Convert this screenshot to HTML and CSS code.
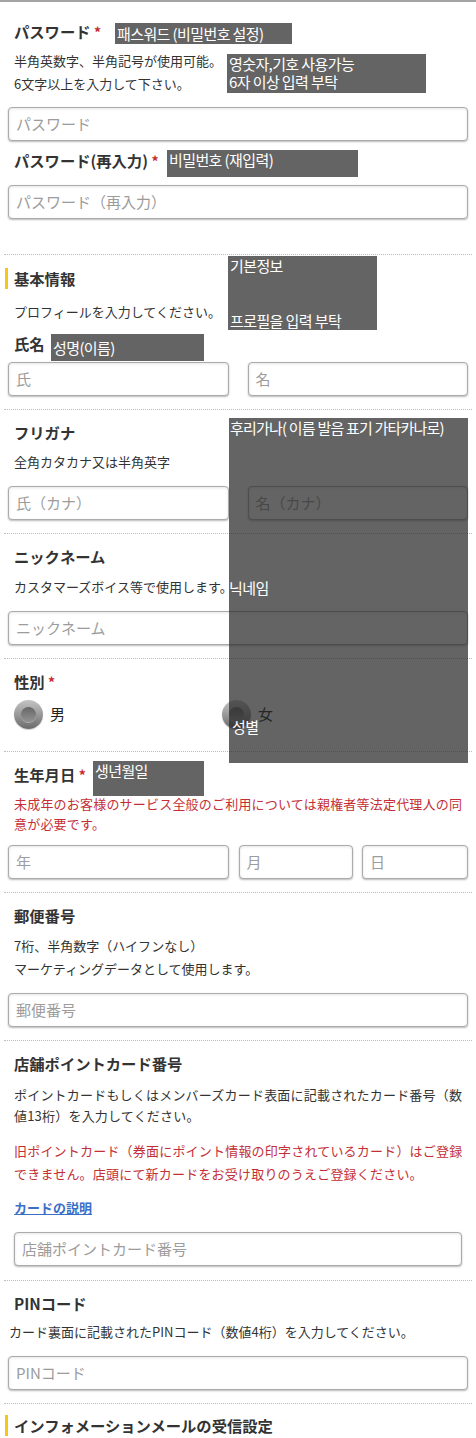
FILE: index.html
```html
<!DOCTYPE html>
<html lang="ja">
<head>
<meta charset="utf-8">
<title>会員登録</title>
<link rel="stylesheet" href="styles.css">
</head>
<body>
<div class="topline"></div>
<div class="page">
  <section class="section section--first">
    <div class="label">パスワード <span class="req">*</span></div>
    <p class="help help--pw">半角英数字、半角記号が使用可能。<br>6文字以上を入力して下さい。</p>
    <div class="field field--pw"><span class="ph">パスワード</span></div>
    <div class="label label--after-field">パスワード(再入力) <span class="req">*</span></div>
    <div class="field field--pw2"><span class="ph">パスワード（再入力）</span></div>
  </section>

  <section class="section section--head">
    <h2 class="heading">基本情報</h2>
    <p class="help help--profile">プロフィールを入力してください。</p>
    <div class="label label--name">氏名</div>
    <div class="pair">
      <div class="field field--tight"><span class="ph">氏</span></div>
      <div class="field field--tight"><span class="ph">名</span></div>
    </div>
  </section>

  <section class="section">
    <div class="label">フリガナ</div>
    <p class="help">全角カタカナ又は半角英字</p>
    <div class="pair pair--spaced">
      <div class="field field--tight"><span class="ph">氏（カナ）</span></div>
      <div class="field field--tight"><span class="ph">名（カナ）</span></div>
    </div>
  </section>

  <section class="section">
    <div class="label">ニックネーム</div>
    <p class="help help--nick">カスタマーズボイス等で使用します。</p>
    <div class="field"><span class="ph">ニックネーム</span></div>
  </section>

  <section class="section section--gender">
    <div class="label">性別 <span class="req">*</span></div>
    <div class="radios">
      <label class="radio-item"><span class="radio"></span><span class="radio-text">男</span></label>
      <label class="radio-item"><span class="radio"></span><span class="radio-text">女</span></label>
    </div>
  </section>

  <section class="section">
    <div class="label">生年月日 <span class="req">*</span></div>
    <p class="note note--birth">未成年のお客様のサービス全般のご利用については親権者等法定代理人の同意が必要です。</p>
    <div class="birth">
      <div class="field field--tight"><span class="ph">年</span></div>
      <div class="field field--tight"><span class="ph">月</span></div>
      <div class="field field--tight"><span class="ph">日</span></div>
    </div>
  </section>

  <section class="section">
    <div class="label label--postal">郵便番号</div>
    <p class="help help--postal">7桁、半角数字（ハイフンなし）<br>マーケティングデータとして使用します。</p>
    <div class="field"><span class="ph">郵便番号</span></div>
  </section>

  <section class="section section--card">
    <div class="label label--postal">店舗ポイントカード番号</div>
    <p class="help help--card">ポイントカードもしくはメンバーズカード表面に記載されたカード番号（数値13桁）を入力してください。</p>
    <p class="note note--card">旧ポイントカード（券面にポイント情報の印字されているカード）はご登録できません。店頭にて新カードをお受け取りのうえご登録ください。</p>
    <a class="link" href="#">カードの説明</a>
    <div class="field field--card"><span class="ph">店舗ポイントカード番号</span></div>
  </section>

  <section class="section">
    <div class="label label--postal">PINコード</div>
    <p class="help help--pin">カード裏面に記載されたPINコード（数値4桁）を入力してください。</p>
    <div class="field"><span class="ph">PINコード</span></div>
  </section>

  <section class="section section--last">
    <h2 class="heading">インフォメーションメールの受信設定</h2>
  </section>

  <div class="ov ov-1">패스워드 (비밀번호 설정)</div>
  <div class="ov ov-2">영숫자,기호 사용가능<br>6자 이상 입력 부탁</div>
  <div class="ov ov-3">비밀번호 (재입력)</div>
  <div class="ov ov-4"><span>기본정보</span><span>프로필을 입력 부탁</span></div>
  <div class="ov ov-5">성명(이름)</div>
  <div class="ov ov-6">
    <span class="ov6-a">후리가나( 이름 발음 표기 가타카나로)</span>
    <span class="ov6-b">닉네임</span>
    <span class="ov6-c">성별</span>
  </div>
  <div class="ov ov-7">생년월일</div>
</div>
</body>
</html>
```

FILE: styles.css
```css
* { box-sizing: border-box; }

html, body {
  margin: 0;
  padding: 0;
  background: #ffffff;
}

body {
  font-family: "Noto Sans CJK JP", "Noto Sans", sans-serif;
  color: #333333;
  width: 476px;
  overflow: hidden;
}

.topline {
  height: 2px;
  background: #a4a4a4;
}

.page {
  position: relative;
}

.section {
  margin: 0 4px;
  padding: 11px 4px 13px;
  border-bottom: 1px dotted #bcbcbc;
}

.section--first {
  padding-top: 18px;
  padding-bottom: 35px;
}

.section--head {
  padding-top: 13px;
}

.section--gender {
  padding-bottom: 22px;
}

.section--card {
  padding-bottom: 14px;
}

.section--last {
  border-bottom: none;
  padding-top: 11px;
}

.label {
  height: 22px;
  overflow: visible;
  font-size: 15.3px;
  font-weight: 700;
  line-height: 22px;
  padding-left: 6px;
  color: #333333;
  white-space: nowrap;
}

.label--postal {
  margin-top: 0;
}

.label--after-field {
  margin-top: 8px;
}

.label--name {
  margin-top: 9px;
}

.req {
  color: #c8282f;
  font-size: 14px;
  line-height: 1;
}

.heading {
  height: 21px;
  margin: 0 0 0 -3px;
  border-left: 3px solid #f3c816;
  padding-left: 6px;
  font-size: 15.3px;
  font-weight: 700;
  line-height: 21px;
  color: #333333;
  white-space: nowrap;
}

.help,
.note {
  margin: 8px 0 0;
  padding-left: 6px;
  font-size: 13px;
  line-height: 22px;
  color: #333333;
}

.help--pw {
  margin-top: 7px;
  height: 46px;
  line-height: 23px;
}

.help--profile {
  margin-top: 12px;
  height: 22px;
}

.help--nick {
  margin-top: 9px;
}

.help--postal {
  height: 46px;
  line-height: 23px;
}

.help--card {
  margin-top: 10px;
  height: 42px;
  line-height: 21px;
  letter-spacing: 0.2px;
}

.help--pin {
  margin-top: 7px;
  padding-left: 1px;
}

.note {
  color: #c42f36;
  letter-spacing: 0.2px;
}

.note--birth {
  margin-top: 9px;
  height: 40px;
  line-height: 20px;
}

.note--card {
  margin-top: 13px;
  height: 46px;
  line-height: 23px;
}

.link {
  display: block;
  height: 22px;
  margin-top: 12px;
  padding-left: 6px;
  font-size: 13px;
  line-height: 22px;
  font-weight: 700;
  color: #3b6fc6;
  text-decoration: underline;
  width: max-content;
}

.field {
  margin-top: 13px;
  height: 34px;
  border: 1px solid #ababab;
  border-radius: 4px;
  background: #ffffff;
  box-shadow: 0 1px 2px rgba(0, 0, 0, 0.28), inset 0 1px 3px rgba(0, 0, 0, 0.1);
  display: flex;
  align-items: center;
  padding-left: 7px;
}

.field--pw {
  margin-top: 12px;
}

.field--pw2 {
  margin-top: 14px;
}

.field--card {
  margin: 13px 6px 0;
}

.field--tight {
  margin-top: 0;
}

.ph {
  font-size: 15px;
  line-height: 20px;
  color: #9c9c9c;
  white-space: nowrap;
}

.pair {
  margin-top: 8px;
  display: grid;
  grid-template-columns: 1fr 1fr;
  column-gap: 19px;
}

.pair--spaced {
  margin-top: 13px;
}

.birth {
  margin-top: 11px;
  display: grid;
  grid-template-columns: 221px 114px 106px;
  justify-content: space-between;
}

.radios {
  margin-top: 7px;
  height: 30px;
  padding-left: 6px;
  display: grid;
  grid-template-columns: 208px 1fr;
  align-items: center;
}

.radio-item {
  display: flex;
  align-items: center;
  gap: 7px;
  height: 30px;
}

.radio {
  position: relative;
  width: 29px;
  height: 29px;
  border-radius: 50%;
  background: linear-gradient(#c4c4c4 0%, #9e9e9e 45%, #6a6a6a 100%);
  box-shadow: 0 1px 1px rgba(0, 0, 0, 0.2);
  display: flex;
  align-items: center;
  justify-content: center;
}

.radio::after {
  content: "";
  width: 15px;
  height: 15px;
  border-radius: 50%;
  background: linear-gradient(#666666, #929292);
  box-shadow: 0 1px 0 rgba(255, 255, 255, 0.35);
}

.radio-text {
  font-size: 15px;
  line-height: 20px;
  color: #222222;
}

/* Annotation overlays */
.ov {
  position: absolute;
  background: rgba(40, 40, 40, 0.72);
  color: #ffffff;
  font-family: "Noto Sans CJK KR", "Noto Sans", sans-serif;
  font-size: 15px;
  line-height: 19px;
  letter-spacing: -0.6px;
  padding: 0 2px;
  white-space: nowrap;
}

.ov-1 { left: 115px; top: 21px; width: 177px; height: 21px; line-height: 21px; }
.ov-2 { left: 227px; top: 52px; width: 199px; height: 39px; line-height: 18px; padding-top: 1px; }
.ov-3 { left: 167px; top: 148px; width: 191px; height: 27px; }
.ov-4 {
  left: 228px; top: 254px; width: 149px; height: 74px;
  display: flex;
  flex-direction: column;
  justify-content: space-between;
}
.ov-5 { left: 51px; top: 332px; width: 153px; height: 27px; line-height: 27px; }
.ov-6 {
  left: 229px; top: 416px; width: 239px; height: 345px;
  padding: 0 0 0 1px;
  display: flex;
  flex-direction: column;
}
.ov6-a { display: block; letter-spacing: -0.8px; }
.ov6-b { display: block; margin-top: 141px; margin-left: -1px; }
.ov6-c { display: block; margin-top: 120px; margin-left: 2px; }
.ov-7 { left: 93px; top: 759px; width: 111px; height: 35px; }
```
